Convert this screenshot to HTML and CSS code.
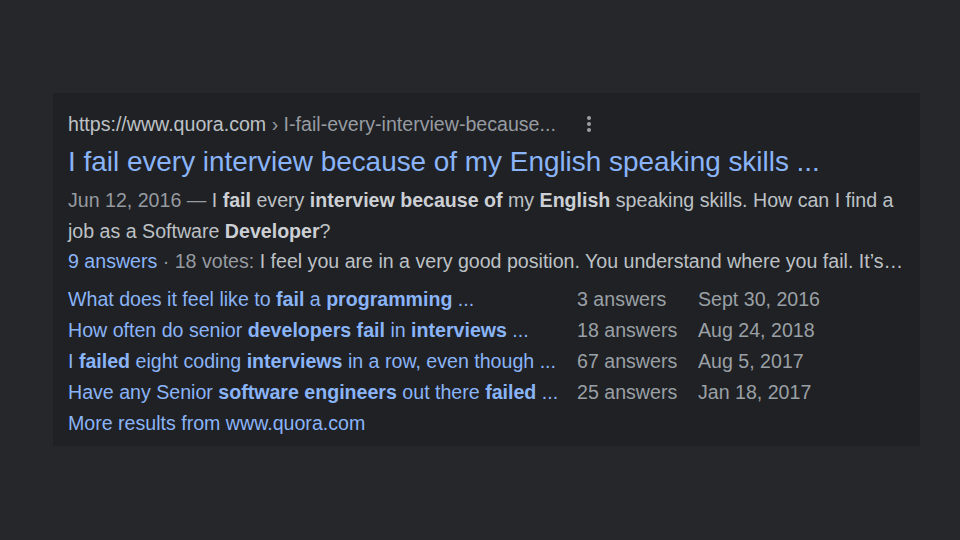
FILE: index.html
```html
<!DOCTYPE html>
<html>
<head>
<meta charset="utf-8">
<link rel="stylesheet" href="styles.css">
</head>
<body>
<div class="page">
  <div class="card">
    <div class="urlrow">
      <span class="host">https://www.quora.com</span><span class="crumb">&nbsp;› I-fail-every-interview-because...</span>
      <span class="menu"><svg width="6" height="18" viewBox="0 0 6 18"><circle cx="3" cy="3" r="2" fill="#9aa0a6"/><circle cx="3" cy="9" r="2" fill="#9aa0a6"/><circle cx="3" cy="15" r="2" fill="#9aa0a6"/></svg></span>
    </div>
    <div class="title">I fail every interview because of my English speaking skills ...</div>
    <div class="snippet"><span class="date">Jun 12, 2016 — </span>I <b>fail</b> every <b>interview because of</b> my <b>English</b> speaking skills. How can I find a job as a Software <b>Developer</b>?</div>
    <div class="answers"><span class="link">9 answers</span><span class="date"> · 18 votes:</span> I feel you are in a very good position. You understand where you fail. It’s…</div>
    <div class="related">
      <div class="q">What does it feel like to <b>fail</b> a <b>programming</b> ...</div><div class="n">3 answers</div><div class="d">Sept 30, 2016</div>
      <div class="q">How often do senior <b>developers fail</b> in <b>interviews</b> ...</div><div class="n">18 answers</div><div class="d">Aug 24, 2018</div>
      <div class="q">I <b>failed</b> eight coding <b>interviews</b> in a row, even though ...</div><div class="n">67 answers</div><div class="d">Aug 5, 2017</div>
      <div class="q">Have any Senior <b>software engineers</b> out there <b>failed</b> ...</div><div class="n">25 answers</div><div class="d">Jan 18, 2017</div>
    </div>
    <div class="more">More results from www.quora.com</div>
  </div>
</div>
</body>
</html>
```
FILE: styles.css
```css
html, body {
  margin: 0;
  padding: 0;
  background: #26272b;
  font-family: "Liberation Sans", Arial, sans-serif;
}
.page {
  width: 960px;
  height: 540px;
  padding: 93px 0 0 53px;
  box-sizing: border-box;
}
.card {
  width: 867px;
  height: 353px;
  box-sizing: border-box;
  background: #202124;
  padding: 19px 15px 0 15px;
}
.urlrow {
  display: flex;
  align-items: center;
  height: 24px;
  font-size: 19.6px;
  line-height: 24px;
  white-space: nowrap;
}
.host { color: #bdc1c6; }
.crumb { color: #969ba1; }
.menu {
  display: flex;
  margin-left: 30px;
}
.title {
  margin-top: 8px;
  font-size: 27.9px;
  line-height: 36px;
  color: #8ab4f8;
  white-space: nowrap;
}
.snippet, .answers {
  font-size: 19.6px;
  line-height: 30.5px;
  color: #bdc1c6;
}
.snippet { margin-top: 5px; width: 835px; }
.snippet b { color: #ccd0d5; }
.date { color: #969ba1; }
.link { color: #8ab4f8; }
.related {
  margin-top: 7px;
  display: grid;
  grid-template-columns: 509px 121px auto;
  font-size: 19.6px;
  line-height: 31px;
  white-space: nowrap;
}
.q { color: #8ab4f8; }
.q b { color: #8ab4f8; }
.n, .d { color: #9aa0a6; }
.more {
  font-size: 19.6px;
  line-height: 31px;
  color: #8ab4f8;
}
```
